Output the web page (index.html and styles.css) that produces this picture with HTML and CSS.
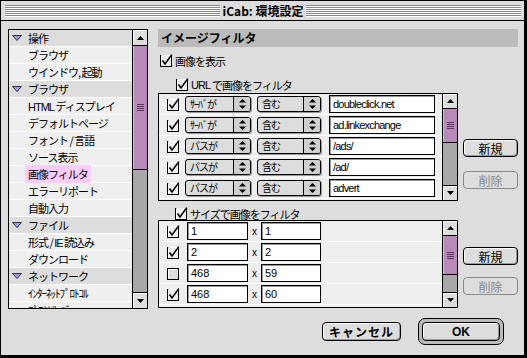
FILE: index.html
```html
<!DOCTYPE html>
<html lang="ja">
<head>
    <meta charset="UTF-8">
    <title>iCab: 環境設定</title>
    <link rel="stylesheet" href="styles.css">
</head>
<body>
    <svg class="defs" xmlns="http://www.w3.org/2000/svg">
        <symbol id="cb-on" viewBox="0 0 13 13">
            <rect x="0.5" y="1.5" width="11" height="11" fill="#eee" stroke="#000"/>
            <path d="M1.5 1.5h10M1.5 1.5v10" stroke="#fff"/>
            <path d="M2.5 6.5L5 10L11.8 0.6" fill="none" stroke="#000" stroke-width="1.6"/>
        </symbol>
        <symbol id="cb-off" viewBox="0 0 13 13">
            <rect x="0.5" y="1.5" width="11" height="11" fill="#ddd" stroke="#000"/>
            <path d="M1.5 2.5h9M1.5 2.5v9" stroke="#fff"/>
        </symbol>
        <symbol id="disc" viewBox="0 0 10 6">
            <polygon points="0.5,0.5 9.5,0.5 5,5.5" fill="#9a9af0" stroke="#333"/>
        </symbol>
        <symbol id="arr-up" viewBox="0 0 7 4">
            <polygon points="3.5,0 7,4 0,4" fill="#000"/>
        </symbol>
        <symbol id="arr-down" viewBox="0 0 7 4">
            <polygon points="0,0 7,0 3.5,4" fill="#000"/>
        </symbol>
        <symbol id="pop" viewBox="0 0 7 10">
            <polygon points="3.5,0 7,3.5 0,3.5" fill="#000"/>
            <polygon points="0,6.5 7,6.5 3.5,10" fill="#000"/>
        </symbol>
    </svg>

    <div class="window">
        <div class="titlebar">
            <div class="stripes"></div>
            <span class="title">iCab: 環境設定</span>
            <div class="stripes"></div>
        </div>

        <div class="content">
            <div class="main">
                <!-- lista de categorias -->
                <div class="tree-box">
                    <ul class="tree">
                        <li class="group"><svg class="disc"><use href="#disc"/></svg>操作</li>
                        <li>ブラウザ</li>
                        <li>ウインドウ, 起動</li>
                        <li class="group"><svg class="disc"><use href="#disc"/></svg>ブラウザ</li>
                        <li><span class="latin">HTML</span> ディスプレイ</li>
                        <li>デフォルトページ</li>
                        <li>フォント / 言語</li>
                        <li>ソース表示</li>
                        <li><span class="selected">画像フィルタ</span></li>
                        <li>エラーリポート</li>
                        <li>自動入力</li>
                        <li class="group"><svg class="disc"><use href="#disc"/></svg>ファイル</li>
                        <li>形式 / <span class="latin">IE</span> 読込み</li>
                        <li>ダウンロード</li>
                        <li class="group"><svg class="disc"><use href="#disc"/></svg>ネットワーク</li>
                        <li>ｲﾝﾀｰﾈｯﾄﾌﾟﾛﾄｺﾙ</li>
                        <li>ﾌﾟﾛｷｼｻｰﾊﾞ</li>
                    </ul>
                    <div class="scrollbar">
                        <div class="arrow up"><svg class="arr"><use href="#arr-up"/></svg></div>
                        <div class="thumb thumb-tree"><div class="grip"></div></div>
                        <div class="arrow down"><svg class="arr"><use href="#arr-down"/></svg></div>
                    </div>
                </div>

                <div class="panel">
                    <div class="panel-title">イメージフィルタ</div>

                    <div class="check check-show">
                        <svg class="cb"><use href="#cb-on"/></svg>画像を表示
                    </div>
                    <div class="check check-url">
                        <svg class="cb"><use href="#cb-on"/></svg><span class="latin">URL</span>で画像をフィルタ
                    </div>

                    <div class="group-row">
                        <div class="list-box list-url">
                            <div class="rows">
                                <div class="row">
                                    <svg class="cb"><use href="#cb-on"/></svg>
                                    <div class="popup pop-1"><span class="pop-label">ｻｰﾊﾞが</span><span class="pop-arrows"><svg><use href="#pop"/></svg></span></div>
                                    <div class="popup pop-2"><span class="pop-label">含む</span><span class="pop-arrows"><svg><use href="#pop"/></svg></span></div>
                                    <div class="field field-url">doubleclick.net</div>
                                </div>
                                <div class="row">
                                    <svg class="cb"><use href="#cb-on"/></svg>
                                    <div class="popup pop-1"><span class="pop-label">ｻｰﾊﾞが</span><span class="pop-arrows"><svg><use href="#pop"/></svg></span></div>
                                    <div class="popup pop-2"><span class="pop-label">含む</span><span class="pop-arrows"><svg><use href="#pop"/></svg></span></div>
                                    <div class="field field-url">ad.linkexchange</div>
                                </div>
                                <div class="row">
                                    <svg class="cb"><use href="#cb-on"/></svg>
                                    <div class="popup pop-1"><span class="pop-label">パスが</span><span class="pop-arrows"><svg><use href="#pop"/></svg></span></div>
                                    <div class="popup pop-2"><span class="pop-label">含む</span><span class="pop-arrows"><svg><use href="#pop"/></svg></span></div>
                                    <div class="field field-url">/ads/</div>
                                </div>
                                <div class="row">
                                    <svg class="cb"><use href="#cb-on"/></svg>
                                    <div class="popup pop-1"><span class="pop-label">パスが</span><span class="pop-arrows"><svg><use href="#pop"/></svg></span></div>
                                    <div class="popup pop-2"><span class="pop-label">含む</span><span class="pop-arrows"><svg><use href="#pop"/></svg></span></div>
                                    <div class="field field-url">/ad/</div>
                                </div>
                                <div class="row">
                                    <svg class="cb"><use href="#cb-on"/></svg>
                                    <div class="popup pop-1"><span class="pop-label">パスが</span><span class="pop-arrows"><svg><use href="#pop"/></svg></span></div>
                                    <div class="popup pop-2"><span class="pop-label">含む</span><span class="pop-arrows"><svg><use href="#pop"/></svg></span></div>
                                    <div class="field field-url">advert</div>
                                </div>
                            </div>
                            <div class="scrollbar">
                                <div class="arrow up small"><svg class="arr"><use href="#arr-up"/></svg></div>
                                <div class="thumb thumb-url"><div class="grip"></div></div>
                                <div class="arrow down small"><svg class="arr"><use href="#arr-down"/></svg></div>
                            </div>
                        </div>
                        <div class="side side-url">
                            <div class="btn">新規</div>
                            <div class="btn disabled">削除</div>
                        </div>
                    </div>

                    <div class="check check-size">
                        <svg class="cb"><use href="#cb-on"/></svg>サイズで画像をフィルタ
                    </div>

                    <div class="group-row">
                        <div class="list-box list-size">
                            <div class="rows">
                                <div class="row">
                                    <svg class="cb"><use href="#cb-on"/></svg>
                                    <div class="field field-w">1</div><span class="times">x</span><div class="field field-h">1</div>
                                </div>
                                <div class="row">
                                    <svg class="cb"><use href="#cb-on"/></svg>
                                    <div class="field field-w">2</div><span class="times">x</span><div class="field field-h">2</div>
                                </div>
                                <div class="row">
                                    <svg class="cb"><use href="#cb-off"/></svg>
                                    <div class="field field-w">468</div><span class="times">x</span><div class="field field-h">59</div>
                                </div>
                                <div class="row">
                                    <svg class="cb"><use href="#cb-on"/></svg>
                                    <div class="field field-w">468</div><span class="times">x</span><div class="field field-h">60</div>
                                </div>
                            </div>
                            <div class="scrollbar">
                                <div class="arrow up small"><svg class="arr"><use href="#arr-up"/></svg></div>
                                <div class="thumb thumb-size"><div class="grip"></div></div>
                                <div class="arrow down small"><svg class="arr"><use href="#arr-down"/></svg></div>
                            </div>
                        </div>
                        <div class="side side-size">
                            <div class="btn">新規</div>
                            <div class="btn disabled">削除</div>
                        </div>
                    </div>
                </div>
            </div>

            <div class="footer">
                <div class="btn btn-cancel">キャンセル</div>
                <div class="default-ring">
                    <div class="btn btn-ok">OK</div>
                </div>
            </div>
        </div>
    </div>
</body>
</html>
```

FILE: styles.css
```css
* {
    box-sizing: border-box;
}

body {
    margin: 0;
    background: #dddddd;
    color: #000;
    font-family: "Noto Sans CJK JP", sans-serif;
    font-size: 11px;
}

.defs {
    position: absolute;
    width: 0;
    height: 0;
}

.latin {
    font-family: "Liberation Sans", sans-serif;
}

/* ventana */
.window {
    width: 527px;
    height: 358px;
    background: #dddddd;
    border: 1px solid #000;
    border-right-width: 3px;
    border-bottom-width: 3px;
}

.titlebar {
    height: 20px;
    border-bottom: 1px solid #000;
    display: flex;
    align-items: center;
    gap: 3px;
    padding: 0 3px 0 4px;
}

.stripes {
    flex: 1;
    height: 12px;
    background: repeating-linear-gradient(to bottom, #888 0 1px, #fff 1px 2px);
}

.title {
    font-weight: bold;
    font-size: 12px;
    line-height: 19px;
    white-space: nowrap;
}

.content {
    padding: 8px 5px 0 7px;
}

.main {
    display: flex;
    gap: 10px;
}

/* lista lateral */
.tree-box {
    width: 140px;
    height: 280px;
    border: 1px solid #000;
    background: #efefef;
    display: flex;
}

.tree {
    flex: 1;
    list-style: none;
    margin: 0;
    padding: 0;
    overflow: hidden;
}

.tree li {
    height: 17px;
    line-height: 16px;
    border-bottom: 1px solid #fff;
    padding-left: 19px;
    letter-spacing: -1px;
    white-space: nowrap;
}

.tree li.group {
    background: #dddddd;
    padding-left: 3px;
    display: flex;
    align-items: center;
    gap: 6px;
}

.disc {
    width: 10px;
    height: 6px;
}

.selected {
    background: #ffccff;
    padding: 1px 3px;
    margin-left: -3px;
}

/* barras de desplazamiento */
.scrollbar {
    width: 15px;
    border-left: 1px solid #000;
    background: #a8a8a8;
    display: flex;
    flex-direction: column;
}

.arrow {
    height: 16px;
    background: #dddddd;
    display: flex;
    align-items: center;
    justify-content: center;
    box-shadow: inset 1px 1px 0 #fff;
}

.arrow.small {
    height: 15px;
}

.arrow.up {
    border-bottom: 1px solid #000;
}

.arrow.down {
    border-top: 1px solid #000;
    margin-top: auto;
}

.arr {
    width: 7px;
    height: 4px;
}

.thumb {
    background: #b98ab9;
    border-bottom: 1px solid #000;
    box-shadow: inset 1px 0 0 #dcb8dc;
    display: flex;
    align-items: center;
    justify-content: center;
}

.thumb-tree {
    height: 124px;
}

.thumb-url {
    height: 34px;
}

.thumb-size {
    height: 39px;
}

.grip {
    width: 7px;
    height: 7px;
    background: repeating-linear-gradient(to bottom, #5a3a5a 0 1px, transparent 1px 2px);
}

/* panel derecho */
.panel {
    width: 360px;
}

.panel-title {
    height: 18px;
    line-height: 18px;
    background: #bbbbbb;
    font-weight: bold;
    font-size: 12px;
    padding-left: 3px;
}

.check {
    display: flex;
    align-items: center;
    height: 13px;
    gap: 2px;
    letter-spacing: -1px;
    white-space: nowrap;
}

.check-show {
    margin: 7px 0 0 2px;
}

.check-url {
    margin: 11px 0 0 18px;
}

.check-size {
    margin: 6px 0 0 17px;
}

.cb {
    width: 13px;
    height: 13px;
    flex: none;
}

.group-row {
    display: flex;
    gap: 5px;
}

.list-url {
    margin-top: 2px;
}

.list-box {
    width: 300px;
    border: 1px solid #000;
    background: #eeeeee;
    display: flex;
}

.list-url {
    height: 108px;
}

.list-size {
    height: 88px;
}

.rows {
    flex: 1;
    overflow: hidden;
}

.row {
    height: 21px;
    border-bottom: 1px solid #fff;
    display: flex;
    align-items: center;
    padding-left: 8px;
}

.popup {
    height: 16px;
    border: 1px solid #000;
    border-radius: 3px;
    background: #dddddd;
    box-shadow: 1px 1px 0 #999;
    display: flex;
    overflow: hidden;
}

.pop-1 {
    width: 66px;
    margin-left: 5px;
}

.pop-2 {
    width: 64px;
    margin-left: 6px;
}

.pop-label {
    flex: 1;
    padding-left: 4px;
    font-size: 10px;
    line-height: 14px;
    letter-spacing: -1px;
    white-space: nowrap;
}

.pop-arrows {
    width: 17px;
    border-left: 1px solid #000;
    background: #d0d0d0;
    display: flex;
    align-items: center;
    justify-content: center;
}

.pop-arrows svg {
    width: 7px;
    height: 10px;
}

.field {
    height: 18px;
    border: 1px solid #000;
    background: #fff;
    box-shadow: inset 1px 1px 0 #999;
    font-family: "Liberation Sans", sans-serif;
    font-size: 11px;
    line-height: 16px;
    padding-left: 3px;
    white-space: nowrap;
}

.field-url {
    width: 106px;
    margin-left: 8px;
    letter-spacing: -0.8px;
}

.field-w {
    width: 61px;
    margin-left: 7px;
}

.field-h {
    width: 60px;
}

.times {
    width: 13px;
    text-align: center;
    font-family: "Liberation Sans", sans-serif;
    font-size: 10px;
}

/* botones */
.side {
    display: flex;
    flex-direction: column;
}

.side-url {
    padding-top: 48px;
    gap: 14px;
}

.side-size {
    padding-top: 27px;
    gap: 12px;
}

.btn {
    width: 55px;
    height: 18px;
    border: 1px solid #000;
    border-radius: 4px;
    background: #dddddd;
    box-shadow: inset 1px 1px 0 #fff, inset -1px -1px 0 #999;
    font-size: 12px;
    display: flex;
    align-items: center;
    justify-content: center;
}

.btn.disabled {
    border-color: #888;
    color: #888;
    box-shadow: none;
}

.footer {
    display: flex;
    justify-content: flex-end;
    align-items: center;
    gap: 17px;
    margin-top: 9px;
    padding-right: 15px;
}

.btn-cancel {
    width: 79px;
    height: 19px;
    font-weight: bold;
    letter-spacing: 1px;
}

.default-ring {
    border: 1px solid #000;
    border-radius: 7px;
    background: #bbbbbb;
    padding: 3px;
}

.btn-ok {
    width: 78px;
    height: 19px;
    font-weight: bold;
    font-family: "Liberation Sans", sans-serif;
}
```
